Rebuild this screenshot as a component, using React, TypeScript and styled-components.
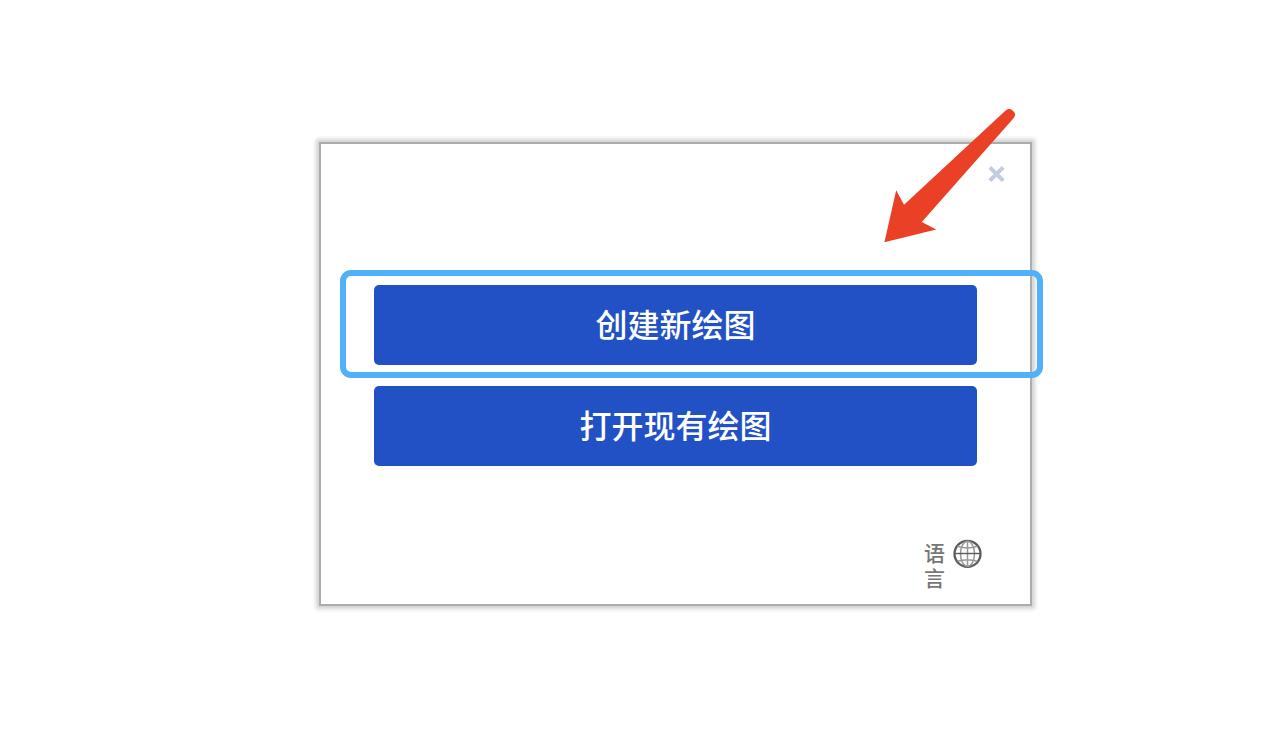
import React from "react";
import styled, { createGlobalStyle } from "styled-components";

const GlobalStyle = createGlobalStyle`
  * { box-sizing: border-box; }
  body {
    margin: 0;
    background: #fff;
    font-family: "Noto Sans CJK SC", sans-serif;
    font-weight: 500;
  }
`;

const Page = styled.main`
  display: flex;
  justify-content: center;
  min-height: 100vh;
  padding: 142px 0 64px 71px;
`;

const Dialog = styled.section`
  position: relative;
  display: flex;
  flex-direction: column;
  align-self: flex-start;
  width: 100%;
  max-width: 713px;
  padding: 21px 53px 14px;
  border: 2px solid #acacac;
  background: #fff;
  box-shadow: 0 0 4px 3px #d2d2d2;
`;

const Header = styled.header`
  display: flex;
  justify-content: flex-end;
  margin-right: -29px;
  margin-bottom: 102px;
`;

const CloseButton = styled.button`
  display: flex;
  padding: 0;
  border: 0;
  background: none;
  color: #c1cce0;
  cursor: pointer;
`;

const Actions = styled.div`
  display: flex;
  flex-direction: column;
  gap: 21px;
`;

const HighlightedAction = styled.div`
  position: relative;
  display: flex;
  flex-direction: column;
`;

const ActionButton = styled.button`
  height: 80px;
  padding: 0 0 4px;
  border: 0;
  border-radius: 5px;
  background: #2251c5;
  color: #fff;
  font-family: inherit;
  font-size: 32px;
  font-weight: 500;
  line-height: 40px;
  cursor: pointer;
`;

const Highlight = styled.span`
  position: absolute;
  inset: -15px -66px -13px -34px;
  border: 6px solid #50b0fa;
  border-radius: 11px;
  pointer-events: none;
`;

const Arrow = styled.svg`
  position: absolute;
  top: -36px;
  right: 12px;
  pointer-events: none;
`;

const Footer = styled.footer`
  display: flex;
  justify-content: flex-end;
  margin-top: 73px;
  margin-right: -6px;
`;

const LanguageLink = styled.a`
  display: flex;
  align-items: flex-start;
  gap: 8px;
  color: #777;
  font-size: 21px;
  line-height: 25px;
  text-decoration: none;
`;

const LanguageLabel = styled.span`
  width: 21px;
  padding-top: 1px;
`;

export default function App() {
  return (
    <>
      <GlobalStyle />
      <Page>
        <Dialog role="dialog" aria-label="绘图">
          <Header>
            <CloseButton type="button" aria-label="关闭">
              <svg width="18" height="18" viewBox="0 0 18 18" stroke="currentColor" strokeWidth="4">
                <path d="M1.8 2.3 15.2 15.7M15.2 2.3 1.8 15.7" />
              </svg>
            </CloseButton>
          </Header>
          <Actions>
            <HighlightedAction>
              <ActionButton type="button">创建新绘图</ActionButton>
              <Highlight />
            </HighlightedAction>
            <ActionButton type="button">打开现有绘图</ActionButton>
          </Actions>
          <Footer>
            <LanguageLink href="#language">
              <LanguageLabel>语言</LanguageLabel>
              <svg width="30" height="30" viewBox="0 0 30 30" fill="none" stroke="#5c5c5c" aria-hidden="true">
                <circle cx="14.5" cy="14.8" r="13" strokeWidth="2.3" />
                <g strokeWidth="1.5" stroke="#999">
                  <ellipse cx="14.5" cy="14.8" rx="7" ry="12.6" />
                  <path d="M14.5 2v26M4.5 7.3Q14.5 10.6 24.5 7.3M4.5 22.3Q14.5 19 24.5 22.3" />
                </g>
                <path d="M2 14.5h25" strokeWidth="1.4" />
              </svg>
            </LanguageLink>
          </Footer>
          <Arrow width="136" height="138" viewBox="0 0 136 138" aria-hidden="true">
            <path
              fill="#ea4026"
              d="M2.4 134.3 14.2 82.2 22 96.7 122.8 3.2C126.5-.2 129 .8 131.2 2.9 133.8 5.4 133.6 7.8 131.3 10.4L39.8 114 54.2 121.5Z"
            />
          </Arrow>
        </Dialog>
      </Page>
    </>
  );
}
